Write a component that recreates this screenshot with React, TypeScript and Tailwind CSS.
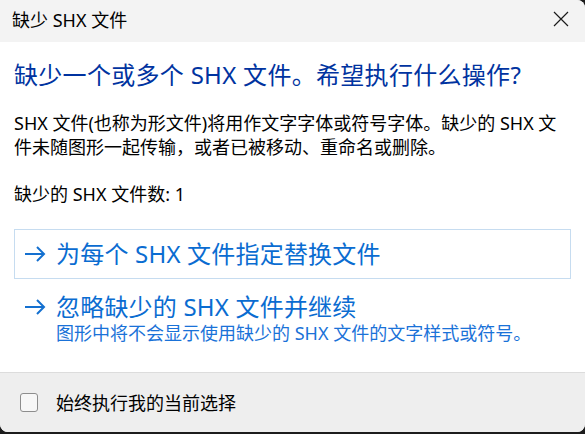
const FONT = "font-['Noto_Sans','Noto_Sans_CJK_SC',sans-serif]"

function ArrowIcon() {
  return (
    <svg width="22" height="16" viewBox="0 0 22 16" fill="none" stroke="currentColor" strokeWidth="2" className="shrink-0">
      <path d="M1 8h19" />
      <path d="M13 1l7 7-7 7" />
    </svg>
  )
}

function CommandLink({ title, note, boxed }: { title: string; note?: string; boxed?: boolean }) {
  return (
    <div
      className={`flex items-start gap-[10px] px-[9px] border ${
        boxed ? "border-[#c6dcf0] py-[10px]" : "border-transparent pt-[13px] pb-[10px]"
      }`}
    >
      <div className="h-[28px] flex items-center text-[#1470d0]">
        <ArrowIcon />
      </div>
      <div className="flex flex-col">
        <span className="text-[24px] leading-[28px] text-[#0a6cd1] tracking-[0.2px]">{title}</span>
        {note && <span className="text-[18px] leading-[24px] text-[#1a72d8]">{note}</span>}
      </div>
    </div>
  )
}

export default function App() {
  return (
    <div className={`w-[585px] h-[434px] bg-[#1c1c1c] ${FONT}`}>
      <div className="h-[432px] flex flex-col overflow-hidden rounded-tr-[8px] rounded-b-[8px] bg-white">
        <div className="h-[42px] shrink-0 flex items-center justify-between pl-[12px] pr-[16px] bg-[#f3f3f3]">
          <span className="text-[18px] leading-[24px] text-black -mt-[3px]">缺少 SHX 文件</span>
          <svg width="16" height="16" viewBox="0 0 16 16" stroke="#1a1a1a" strokeWidth="1.2" className="-mt-[4px]">
            <path d="M1 1l14 14M15 1L1 15" />
          </svg>
        </div>

        <div className="flex-1 flex flex-col px-[14px] text-black">
          <h1 className="mt-[18px] text-[24px] leading-[30px] text-[#0033a0] tracking-[0.3px]">
            缺少一个或多个 SHX 文件。希望执行什么操作?
          </h1>
          <p className="mt-[21px] text-[18px] leading-[24px]">
            SHX 文件(也称为形文件)将用作文字字体或符号字体。缺少的 SHX 文件未随图形一起传输，或者已被移动、重命名或删除。
          </p>
          <p className="mt-[23px] text-[18px] leading-[24px]">缺少的 SHX 文件数: 1</p>

          <div className="mt-[23px] flex flex-col">
            <CommandLink boxed title="为每个 SHX 文件指定替换文件" />
            <CommandLink title="忽略缺少的 SHX 文件并继续" note="图形中将不会显示使用缺少的 SHX 文件的文字样式或符号。" />
          </div>
        </div>

        <div className="h-[60px] shrink-0 flex items-center gap-[18px] px-[20px] border-t border-[#dcdcdc] bg-[#eeeeee]">
          <div className="w-[18px] h-[19px] rounded-[3px] border border-[#8d8d8d] bg-[#f7f7f7]" />
          <span className="text-[18px] leading-[24px] text-black">始终执行我的当前选择</span>
        </div>
      </div>
    </div>
  )
}
